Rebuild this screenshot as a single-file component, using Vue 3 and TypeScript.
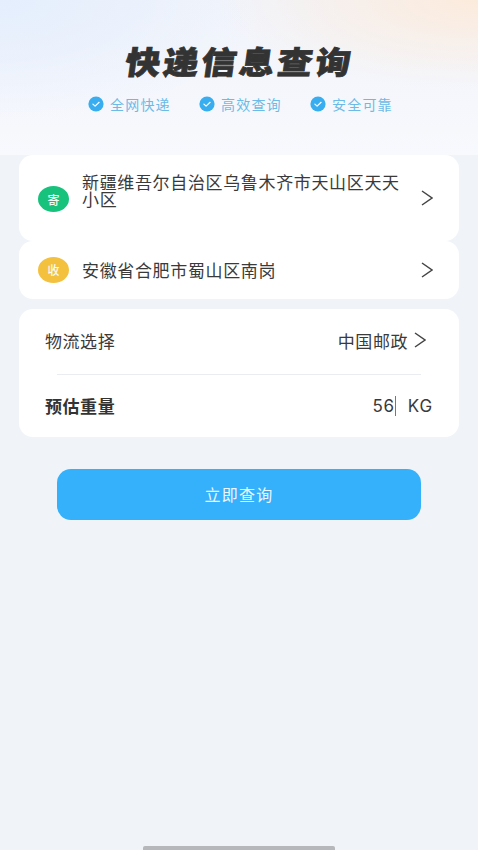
<script setup lang="ts">
const tags: string[] = ['全网快递', '高效查询', '安全可靠']
</script>

<template>
  <div class="page">
    <header class="hero">
      <h1 class="title"><span>快递信息查询</span></h1>
      <ul class="tags">
        <li v-for="t in tags" :key="t" class="tag">
          <svg class="check" viewBox="0 0 16 16" aria-hidden="true">
            <circle cx="8" cy="8" r="7.6" fill="#38aef0" />
            <path d="M4.9 8.1 7.1 10.1 11.1 6.3" fill="none" stroke="#fff" stroke-width="1.2" stroke-linecap="round" stroke-linejoin="round" />
          </svg>
          <span>{{ t }}</span>
        </li>
      </ul>
    </header>

    <main class="content">
      <section class="card addr addr-send">
        <span class="badge green">寄</span>
        <p class="addr-text">新疆维吾尔自治区乌鲁木齐市天山区天天小区</p>
        <svg class="chev" viewBox="0 0 12 16" aria-hidden="true"><path d="M1 1 11 8 1 15" /></svg>
      </section>
      <section class="card addr addr-recv">
        <span class="badge yellow">收</span>
        <p class="addr-text">安徽省合肥市蜀山区南岗</p>
        <svg class="chev" viewBox="0 0 12 16" aria-hidden="true"><path d="M1 1 11 8 1 15" /></svg>
      </section>

      <section class="card form">
        <div class="row row-top">
          <span class="label">物流选择</span>
          <span class="value">中国邮政</span>
          <svg class="chev chev-sm" viewBox="0 0 12 16" aria-hidden="true"><path d="M1 1 11 8 1 15" /></svg>
        </div>
        <div class="divider"></div>
        <div class="row row-bottom">
          <span class="label strong">预估重量</span>
          <span class="num">56</span><span class="caret"></span><span class="unit">KG</span>
        </div>
      </section>

      <button class="submit" type="button">立即查询</button>
    </main>

    <div class="home-bar"></div>
  </div>
</template>

<style>
html, body { margin: 0; padding: 0; background: #f0f4f9; }
</style>

<style scoped>
.page {
  position: relative;
  width: 478px;
  height: 850px;
  overflow: hidden;
  background: #f0f4f9;
  font-family: "Noto Sans CJK SC", "Liberation Sans", sans-serif;
  color: #333;
}
.hero {
  height: 155px;
  box-sizing: border-box;
  padding-top: 39px;
  background:
    radial-gradient(ellipse 260px 90px at 100% 0, #fcebdc 0%, rgba(252, 235, 220, 0) 100%),
    radial-gradient(ellipse 260px 120px at 0 0, #e4eefd 0%, rgba(228, 238, 253, 0) 100%),
    linear-gradient(180deg, #f1f4fb 0%, #f4f6fc 50%, #f8f9fd 100%);
}
.title {
  margin: 0;
  height: 42px;
  line-height: 42px;
  text-align: center;
  font-size: 35px;
  font-weight: 900;
  letter-spacing: 3px;
  padding-left: 3px;
  color: #333;
}
.title span {
  display: inline-block;
  transform: skewX(-8deg) scaleY(0.9);
  -webkit-text-stroke: 0.9px #333;
}
.tags {
  list-style: none;
  margin: 15px 0 0 88px;
  padding: 0;
  display: flex;
  gap: 28px;
}
.tag {
  display: flex;
  align-items: center;
  gap: 6px;
  width: 83px;
  height: 16px;
  font-size: 14px;
  letter-spacing: 1.2px;
  white-space: nowrap;
  color: #6cbbe6;
}
.check { width: 16px; height: 16px; flex: none; }
.content {
  display: flex;
  flex-direction: column;
  padding: 0 19px;
}
.card {
  background: #fff;
  border-radius: 14px;
}
.addr {
  display: flex;
  align-items: flex-start;
  box-sizing: border-box;
  padding-left: 19px;
  padding-right: 26px;
}
.addr-send { height: 86px; padding-top: 18px; }
.addr-recv { height: 58px; align-items: center; padding-bottom: 1px; }
.badge {
  flex: none;
  width: 31px;
  height: 26px;
  border-radius: 50%;
  display: flex;
  align-items: center;
  justify-content: center;
  color: #f3fbf7;
  font-size: 12px;
  font-weight: 500;
}
.addr-send .badge { margin-top: 13px; }
.green { background: #17c27c; }
.yellow { background: #f4c13f; }
.addr-text {
  margin: 0 0 0 13px;
  width: 324px;
  font-size: 17px;
  line-height: 17px;
  letter-spacing: 0.65px;
  color: #3a3a3a;
}
.chev {
  width: 12px;
  height: 16px;
  flex: none;
  margin-left: auto;
  fill: none;
  stroke: #444;
  stroke-width: 1.5;
}
.addr-send .chev { margin-top: 17px; }
.form {
  margin-top: 10px;
  height: 128px;
  padding: 0 26px;
}
.row {
  display: flex;
  align-items: center;
  font-size: 17px;
  letter-spacing: 0.55px;
  box-sizing: border-box;
  padding-bottom: 3px;
}
.row-top { height: 65px; }
.row-bottom { height: 64px; }
.label { margin-right: auto; color: #3a3a3a; }
.strong { font-weight: 700; color: #333; }
.value { color: #3a3a3a; margin-right: 6px; }
.chev-sm { margin-left: 0; margin-right: 7px; }
.divider {
  height: 1px;
  margin: 0 12px;
  background: #e9ecf0;
}
.num, .unit {
  font-family: "Inter", "Liberation Sans", sans-serif;
  font-size: 17px;
  letter-spacing: 0.8px;
  color: #3a3a3a;
}
.caret {
  width: 1px;
  height: 20px;
  background: #777;
}
.unit { margin-left: 12px; }
.submit {
  align-self: center;
  margin-top: 32px;
  width: 364px;
  height: 51px;
  padding: 0 0 2px;
  border: 0;
  border-radius: 14px;
  background: #35b0fb;
  color: #eaf6ff;
  font-family: inherit;
  font-size: 16px;
  letter-spacing: 1.3px;
}
.home-bar {
  position: absolute;
  left: 143px;
  bottom: 0;
  width: 192px;
  height: 4px;
  background: #b5b7bb;
  border-radius: 2px 2px 0 0;
}
</style>
